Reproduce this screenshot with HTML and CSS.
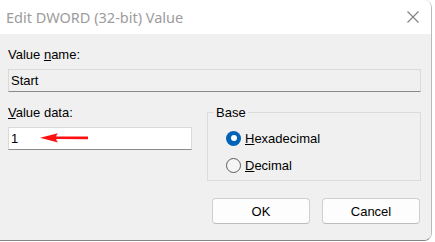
FILE: index.html
```html
<!DOCTYPE html>
<html>
<head>
<meta charset="utf-8">
<link rel="stylesheet" href="styles.css">
</head>
<body>
<div class="window">
  <div class="titlebar">
    <span class="title">Edit DWORD (32-bit) Value</span>
    <svg class="close" width="12" height="12" viewBox="0 0 12 12"><path d="M0.5 0.5L11.5 11.5M11.5 0.5L0.5 11.5" stroke="#7f7f7f" stroke-width="1.1" fill="none"/></svg>
  </div>
  <div class="content">
    <div class="label">Value <u>n</u>ame:</div>
    <div class="field readonly">Start</div>
    <div class="row">
      <div class="left">
        <div class="label"><u>V</u>alue data:</div>
        <div class="field input">1
          <svg class="arrow" width="52" height="12" viewBox="0 0 52 12"><path d="M1 5.8L19 1.2Q16.5 4.3 17.5 4.6L49 4.4L49 7.3L17.5 7.1Q16.5 7.4 19 10.6Z" fill="#ff1010"/></svg>
        </div>
      </div>
      <fieldset class="group">
        <legend>Base</legend>
        <label class="radio"><input type="radio" name="base" checked><span><u>H</u>exadecimal</span></label>
        <label class="radio"><input type="radio" name="base"><span><u>D</u>ecimal</span></label>
      </fieldset>
    </div>
    <div class="buttons">
      <button class="btn">OK</button>
      <button class="btn">Cancel</button>
    </div>
  </div>
</div>
</body>
</html>
```
FILE: styles.css
```css
html, body {
  margin: 0;
  padding: 0;
  background: #ffffff;
}
.window {
  width: 432px;
  height: 241px;
  box-sizing: border-box;
  border-right: 1px solid #b9b9b9;
  border-bottom: 1px solid #858585;
  border-radius: 0 8px 8px 0;
  overflow: hidden;
  display: flex;
  flex-direction: column;
  font-family: "Liberation Sans", Arial, sans-serif;
  font-size: 13px;
  color: #000;
}
.titlebar {
  height: 34px;
  flex: none;
  background: #ffffff;
  display: flex;
  align-items: center;
  justify-content: space-between;
  padding: 0 12px 1px 6px;
  box-sizing: border-box;
}
.title {
  font-family: "Noto Sans", sans-serif;
  font-size: 14.5px;
  color: #9c9c9c;
}
.close {
  display: block;
}
.content {
  flex: 1;
  background: #f0f0f0;
  padding: 13px 10px 0 8px;
  display: flex;
  flex-direction: column;
}
.label {
  line-height: 15px;
  height: 15px;
}
.field {
  height: 23px;
  box-sizing: border-box;
  border: 1px solid #dadada;
  border-bottom-color: #8a8a8a;
  line-height: 21px;
  padding-left: 2px;
  margin-top: 7px;
}
.readonly {
  background: #f0f0f0;
}
.input {
  background: #ffffff;
  position: relative;
  width: 184px;
}
.arrow {
  position: absolute;
  left: 30px;
  top: 4px;
}
.row {
  display: flex;
  align-items: flex-start;
  gap: 15px;
  margin-top: 13px;
}
.left {
  width: 184px;
}
.group {
  margin: 0;
  width: 215px;
  box-sizing: border-box;
  border: 1px solid #dcdcdc;
  padding: 8px 0 5px 0;
  display: flex;
  flex-direction: column;
  gap: 7px;
}
.group legend {
  padding: 0 2px;
  margin-left: 6px;
  line-height: 15px;
}
.radio {
  display: flex;
  align-items: center;
  gap: 4px;
  height: 20px;
  margin-left: 18px;
}
.radio input {
  appearance: none;
  -webkit-appearance: none;
  margin: 0;
  width: 15px;
  height: 15px;
  box-sizing: border-box;
  border-radius: 50%;
  border: 1px solid #5a5a5a;
  background: #f5f5f5;
  position: relative;
}
.radio input:checked {
  border: none;
  background: #0063b8;
}
.radio input:checked::after {
  content: "";
  position: absolute;
  left: 4.5px;
  top: 4.5px;
  width: 6px;
  height: 6px;
  border-radius: 50%;
  background: #ffffff;
}
.buttons {
  display: flex;
  justify-content: flex-end;
  gap: 12px;
  margin-top: 17px;
  margin-right: 1px;
}
.btn {
  width: 98px;
  height: 26px;
  box-sizing: border-box;
  border: 1px solid #cfcfcf;
  border-bottom-color: #bdbdbd;
  border-radius: 4px;
  background: #fdfdfd;
  font-family: "Liberation Sans", Arial, sans-serif;
  font-size: 13px;
  color: #000;
  padding: 0;
}
```
